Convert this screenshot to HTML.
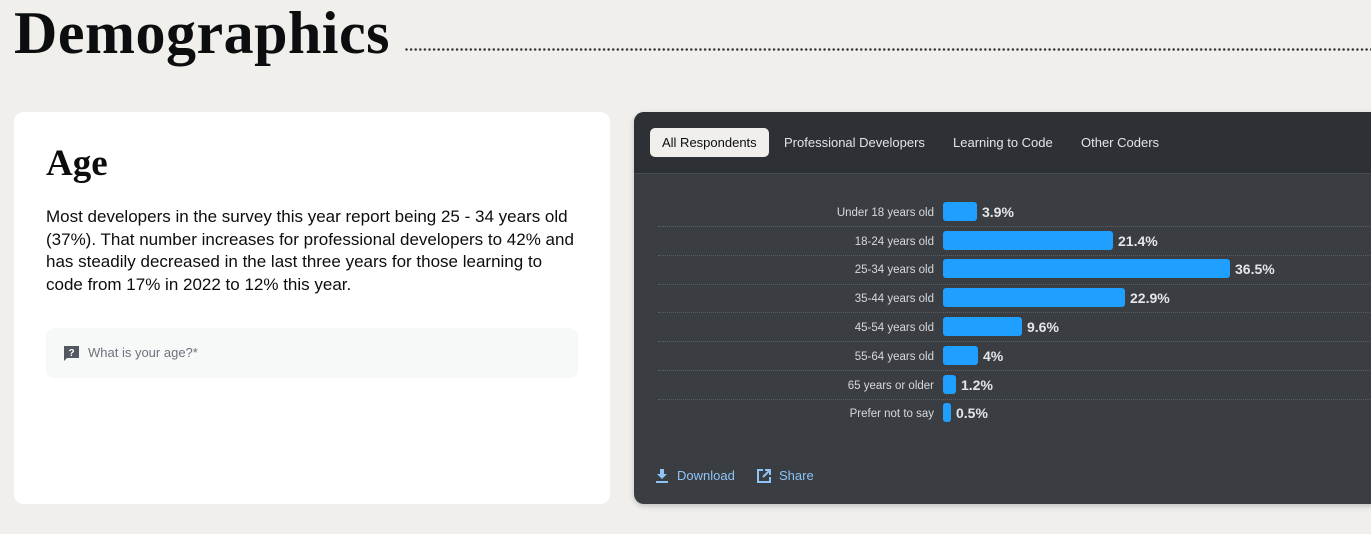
<!DOCTYPE html>
<html><head><style>
body{margin:0;width:1371px;height:534px;background:#f0efeb;overflow:hidden;position:relative;font-family:"Liberation Sans",sans-serif}
h1{position:absolute;left:14px;top:0;margin:0;font:bold 60px/66px "Liberation Serif",serif;color:#0c0d0e;letter-spacing:0.5px}
.dots{position:absolute;left:405px;right:0;top:48px;height:4px;background:radial-gradient(circle at 1.5px 1.5px,#333 1.1px,transparent 1.4px) 0 0/4.6px 4px repeat-x}
.card{position:absolute;left:14px;top:112px;width:596px;height:392px;background:#fff;border-radius:10px}
.card h2{position:absolute;left:32px;top:30px;margin:0;font:bold 37px "Liberation Serif",serif;color:#0c0d0e}
.card p{position:absolute;left:32px;top:94px;width:535px;margin:0;font-size:17px;line-height:22.5px;color:#0c0d0e}
.q{position:absolute;left:32px;top:216px;width:532px;height:50px;background:#f7f8f8;border-radius:8px;font-size:13px;color:#6a737c}
.q span{position:absolute;left:42px;top:17px}
.panel{position:absolute;left:634px;top:112px;width:760px;height:392px;background:#3a3e43;border-radius:10px;overflow:hidden;box-shadow:0 2px 6px rgba(0,0,0,.2)}
.hdr{height:61px;background:#2d3035;border-bottom:1px solid #454a50;position:relative}
.tab{position:absolute;top:16px;height:29px;line-height:29px;font-size:13px;color:#e3e6e8;padding:0 12px;border-radius:5px}
.tab.a{background:#f0efeb;color:#0c0d0e}
.lbl{position:absolute;font-size:11.5px;color:#d6d9dc;text-align:right}
.bar{position:absolute;left:309px;height:19px;background:#1f9fff;border-radius:3px}
.val{position:absolute;font-size:14px;font-weight:bold;color:#e3e6e8}
.ln{position:absolute;left:24px;right:0;border-top:1px dotted #5a5f65}
.ft{position:absolute;top:356px;font-size:13px;color:#8ec3f5}
</style></head><body>
<h1>Demographics</h1><div class="dots"></div>
<div class="card"><h2>Age</h2>
<p>Most developers in the survey this year report being 25 - 34 years old (37%). That number increases for professional developers to 42% and has steadily decreased in the last three years for those learning to code from 17% in 2022 to 12% this year.</p>
<div class="q"><svg style="position:absolute;left:17px;top:17px" width="16" height="17" viewBox="0 0 16 17"><path d="M1 1h15v12H4l-3 3z" fill="#525960"/><text x="8.5" y="11" font-size="10" font-weight="bold" fill="#fff" text-anchor="middle" font-family="Liberation Sans">?</text></svg><span>What is your age?*</span></div>
</div>
<div class="panel">
<div class="hdr">
<div class="tab a" style="left:16px">All Respondents</div>
<div class="tab" style="left:138px">Professional Developers</div>
<div class="tab" style="left:307px">Learning to Code</div>
<div class="tab" style="left:435px">Other Coders</div>
</div>
<div class="lbl" style="top:95px;left:0;width:300px">Under 18 years old</div><div class="bar" style="top:90px;width:34px"></div><div class="val" style="top:92px;left:348px">3.9%</div><div class="ln" style="top:114px"></div>
<div class="lbl" style="top:124px;left:0;width:300px">18-24 years old</div><div class="bar" style="top:119px;width:170px"></div><div class="val" style="top:121px;left:484px">21.4%</div><div class="ln" style="top:143px"></div>
<div class="lbl" style="top:152px;left:0;width:300px">25-34 years old</div><div class="bar" style="top:147px;width:287px"></div><div class="val" style="top:149px;left:601px">36.5%</div><div class="ln" style="top:172px"></div>
<div class="lbl" style="top:181px;left:0;width:300px">35-44 years old</div><div class="bar" style="top:176px;width:182px"></div><div class="val" style="top:178px;left:496px">22.9%</div><div class="ln" style="top:200px"></div>
<div class="lbl" style="top:210px;left:0;width:300px">45-54 years old</div><div class="bar" style="top:205px;width:79px"></div><div class="val" style="top:207px;left:393px">9.6%</div><div class="ln" style="top:229px"></div>
<div class="lbl" style="top:239px;left:0;width:300px">55-64 years old</div><div class="bar" style="top:234px;width:35px"></div><div class="val" style="top:236px;left:349px">4%</div><div class="ln" style="top:258px"></div>
<div class="lbl" style="top:268px;left:0;width:300px">65 years or older</div><div class="bar" style="top:263px;width:13px"></div><div class="val" style="top:265px;left:327px">1.2%</div><div class="ln" style="top:287px"></div>
<div class="lbl" style="top:296px;left:0;width:300px">Prefer not to say</div><div class="bar" style="top:291px;width:8px"></div><div class="val" style="top:293px;left:322px">0.5%</div>
<svg style="position:absolute;left:21px;top:357px" width="14" height="14" viewBox="0 0 14 14"><path d="M5 0h4v5h3L7 10 2 5h3z M1 12h12v2H1z" fill="#8ec3f5"/></svg>
<div class="ft" style="left:43px">Download</div>
<svg style="position:absolute;left:123px;top:357px" width="14" height="14" viewBox="0 0 14 14"><path d="M6 1H1v12h12V8" fill="none" stroke="#8ec3f5" stroke-width="2"/><path d="M8 1h5v5M13 1L6 8" fill="none" stroke="#8ec3f5" stroke-width="2"/></svg>
<div class="ft" style="left:145px">Share</div>
</div>
</body></html>
